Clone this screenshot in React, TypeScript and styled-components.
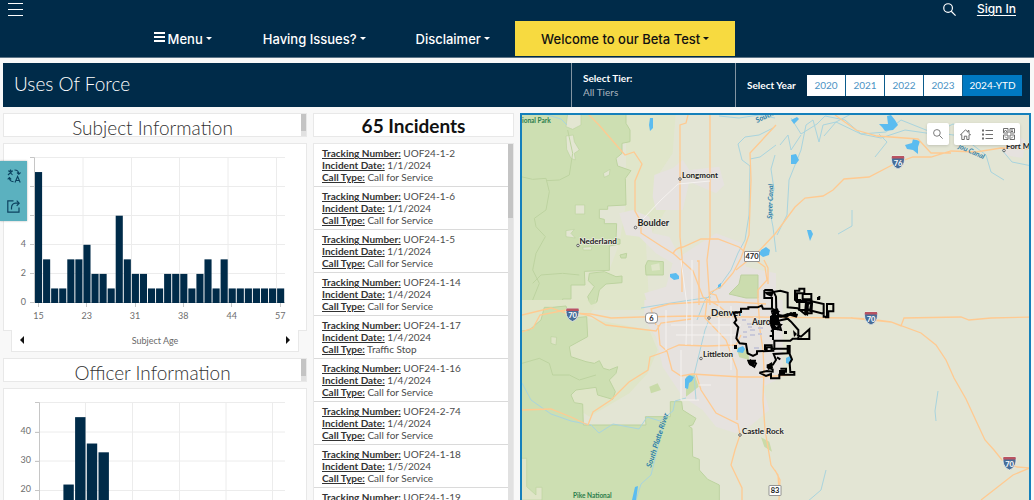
import React from "react";
import styled, { createGlobalStyle, css } from "styled-components";

const navy = "#002b49";
const bodyFont = `Lato, "Open Sans", sans-serif`;
const navFont = `Inter, "Open Sans", sans-serif`;

const GlobalStyle = createGlobalStyle`
  *, *::before, *::after { box-sizing: border-box; }
  html, body { margin: 0; background: #f8f8f8; }
  body { font-family: ${bodyFont}; overflow: hidden; }
  button, select { font: inherit; border: 0; margin: 0; padding: 0; background: none; cursor: pointer; }
  h1, h2, ul, p { margin: 0; padding: 0; font-weight: inherit; }
`;

const Page = styled.div`
  display: flex;
  flex-direction: column;
  height: 100vh;
`;

const Header = styled.header`
  background: ${navy};
  color: #fff;
  border-bottom: 1px solid #5d7588;
  font-family: ${navFont};
  padding-bottom: 1px;
`;

const TopRow = styled.div`
  display: flex;
  align-items: center;
  height: 21px;
  padding: 0 18px 3px 8px;
`;

const IconButton = styled.button`
  display: flex;
  align-items: center;
  justify-content: center;
  color: inherit;
`;

const SearchToggle = styled(IconButton)`
  margin-left: auto;
  margin-right: 21px;
`;

const SignIn = styled.a`
  color: #fff;
  font-size: 12px;
  font-weight: 500;
  line-height: 16px;
  text-underline-offset: 2px;
`;

const Nav = styled.nav`
  display: grid;
  grid-template-columns: 111px 152px 125px 220px;
  margin-left: 12.3%;
`;

const NavButton = styled.button<{ $accent?: boolean }>`
  display: flex;
  align-items: center;
  justify-content: center;
  gap: 3px;
  height: 35px;
  color: #fff;
  font-size: 13px;
  font-weight: 500;
  white-space: nowrap;
  ${(p) =>
    p.$accent &&
    css`
      background: #f7da40;
      color: #111;
    `}
`;

const Caret = styled.span`
  border: 3px solid transparent;
  border-top-color: currentColor;
  border-bottom: 0;
`;

const TitleBar = styled.div`
  display: grid;
  grid-template-columns: minmax(0, 568fr) minmax(0, 164fr) minmax(290px, 295fr);
  height: 44px;
  margin: 5px 4px 6px 3px;
  background: ${navy};
  color: #fff;
  flex: none;
`;

const Title = styled.h1`
  align-self: center;
  padding: 0 11px 2px;
  font-size: 19px;
  font-weight: 300;
  line-height: 24px;
`;

const TierField = styled.label`
  display: flex;
  flex-direction: column;
  padding: 8px 11px;
  border-left: 1px solid #8294a2;
  font-size: 10px;
  font-weight: 700;
  line-height: 14px;
`;

const TierSelect = styled.select`
  appearance: none;
  color: #a9b5bf;
  font-weight: 400;
  text-align: left;
`;

const YearField = styled.div`
  display: flex;
  align-items: center;
  justify-content: space-between;
  padding: 0 8px 0 11px;
  border-left: 1px solid #8294a2;
  font-size: 10px;
  font-weight: 700;
`;

const YearGroup = styled.div`
  display: flex;
  gap: 1px;
  background: #0b5c8c;
`;

const YearButton = styled.button<{ $active?: boolean }>`
  width: ${(p) => (p.$active ? 59 : 38)}px;
  height: 21px;
  background: ${(p) => (p.$active ? "#0079c1" : "#fff")};
  color: ${(p) => (p.$active ? "#fff" : "#4c93c4")};
  font-size: 10px;
  font-weight: 400;
`;

const Dashboard = styled.main`
  display: grid;
  grid-template-columns: minmax(0, 304fr) minmax(0, 201fr) minmax(0, 511fr);
  gap: 6px;
  flex: 1;
  min-height: 0;
  padding: 0 3px;
`;

const Column = styled.section`
  display: flex;
  flex-direction: column;
  min-height: 0;
  overflow: hidden;
`;

const Panel = styled.div`
  background: #fff;
  border: 1px solid #e8e8e8;
`;

const Heading = styled(Panel)<{ $strong?: boolean }>`
  display: flex;
  flex: none;
  height: 24px;
  margin-bottom: 6px;
  h2 {
    flex: 1;
    color: ${(p) => (p.$strong ? "#111" : "#323232")};
    font-size: 19px;
    font-weight: ${(p) => (p.$strong ? 700 : 300)};
    line-height: ${(p) => (p.$strong ? 24 : 28)}px;
    text-align: center;
  }
`;

const ScrollTrack = styled.div<{ $thumb: number }>`
  flex: none;
  width: 5px;
  background: #e1e1e1;
  &::before {
    content: "";
    display: block;
    height: ${(p) => p.$thumb}px;
    background: #c4c4c4;
  }
`;

const ChartPanel = styled(Panel)`
  flex: none;
  svg {
    display: block;
    width: 100%;
    height: auto;
  }
`;

const Pager = styled(Panel)`
  display: flex;
  flex: none;
  align-items: center;
  justify-content: space-between;
  height: 22px;
  margin: -1px 8px 6px;
  border-top: 0;
  padding: 0 8px 1px;
  color: #6a6a6a;
  font-size: 9px;
`;

const Arrow = styled.span<{ $next?: boolean }>`
  border: 4px solid transparent;
  ${(p) =>
    p.$next
      ? css`
          border-left-color: #111;
          border-right: 0;
        `
      : css`
          border-right-color: #111;
          border-left: 0;
        `}
`;

const ListPanel = styled(Panel)`
  display: flex;
  flex: 1;
  min-height: 0;
  border-bottom: 0;
`;

const IncidentList = styled.ul`
  flex: 1;
  list-style: none;
  overflow: hidden;
`;

const Incident = styled.li`
  padding: 3px 8px;
  border-bottom: 1px solid #dadada;
  color: #4c4c4c;
  font-size: 10px;
  line-height: 12px;
  b {
    color: #323232;
    text-decoration: underline;
  }
`;

const MapPanel = styled.section`
  position: relative;
  min-height: 0;
  border: 2px solid #1580bb;
  border-bottom: 0;
  overflow: hidden;
  > svg {
    display: block;
    width: 100%;
    height: 100%;
  }
`;

const MapTools = styled.div`
  position: absolute;
  top: 8px;
  right: 9px;
  display: flex;
  gap: 5px;
`;

const ToolGroup = styled.div`
  display: flex;
  background: #fff;
  border-radius: 2px;
  box-shadow: 0 1px 3px rgba(0, 0, 0, 0.15);
`;

const ToolButton = styled(IconButton)`
  width: 22px;
  height: 22px;
  color: #6e6e6e;
`;

const SideTools = styled.aside`
  position: fixed;
  left: 0;
  top: 161px;
  display: flex;
  flex-direction: column;
  background: #5bb1bf;
  box-shadow: 0 0 2px rgba(0, 0, 0, 0.3);
`;

const SideButton = styled(IconButton)`
  width: 27px;
  height: 30px;
  color: #0c4260;
`;

const MagnifierIcon = ({ size }: { size: number }) => (
  <svg width={size} height={size} viewBox="0 0 12 12" fill="none" stroke="currentColor" strokeWidth="1.1">
    <circle cx="4.7" cy="4.7" r="4" />
    <path d="M7.6 7.6 11.6 11.6" />
  </svg>
);

const ages = [9, 3, 1, 1, 3, 3, 4, 2, 2, 1, 6, 3, 2, 2, 1, 1, 2, 2, 2, 1, 2, 3, 1, 3, 1, 1, 1, 1, 1, 1, 1];

const SubjectChart = () => (
  <svg viewBox="4 144 302 186" fontFamily={bodyFont} fontSize="9" fill="#6e6e6e" role="img" aria-label="Subject age histogram">
    <g stroke="#ececec">
      {[157.5, 186.5, 215.5, 244.5, 273.5].map((y) => <path key={y} d={`M30 ${y}H285`} />)}
      {[83, 131.5, 179.5, 228, 276.5].map((x) => <path key={x} d={`M${x} 157V303`} />)}
    </g>
    <path d="M30 157.5H34.5V303M30 302.5H285M30 186.5h4M30 215.5h4M30 244.5h4M30 273.5h4M38.5 303v4M86.5 303v4M135.5 303v4M183.5 303v4M231.5 303v4M280.5 303v4" fill="none" stroke="#c6c6c6" />
    {ages.map((n, i) => (
      <rect key={i} x={35 + i * 8.07} y={303 - n * 14.55} width="7.1" height={n * 14.55} fill={navy} />
    ))}
    {[["0", 305], ["2", 276], ["4", 247]].map(([t, y]) => (
      <text key={t} x="26" y={y} textAnchor="end">{t}</text>
    ))}
    {[["15", 38.5], ["23", 86.7], ["31", 135], ["38", 183.3], ["44", 231.7], ["57", 280.3]].map(([t, x]) => (
      <text key={t} x={x} y="319" textAnchor="middle">{t}</text>
    ))}
  </svg>
);

const OfficerChart = () => (
  <svg viewBox="4 389 302 187" fontFamily={bodyFont} fontSize="9" fill="#6e6e6e" role="img" aria-label="Officer histogram">
    <g stroke="#ececec">
      {[402.5, 432, 461, 490.5, 519.5].map((y) => <path key={y} d={`M35 ${y}H285`} />)}
      {[85.5, 132.5, 179.5, 226, 272.5].map((x) => <path key={x} d={`M${x} 402V549`} />)}
    </g>
    <path d="M35 402.5H39.5V549M35 548.5H285M35 432.5h4M35 461.5h4M35 490.5h4M35 519.5h4" fill="none" stroke="#c6c6c6" />
    {[22, 45, 36, 33].map((n, i) => (
      <rect key={i} x={63.4 + i * 11.7} y={549 - n * 2.93} width="10.4" height={n * 2.93} fill={navy} />
    ))}
    {[["40", 434], ["30", 463], ["20", 492]].map(([t, y]) => (
      <text key={t} x="31" y={y} textAnchor="end">{t}</text>
    ))}
  </svg>
);

const incidents: [string, string, string][] = [
  ["UOF24-1-2", "1/1/2024", "Call for Service"],
  ["UOF24-1-6", "1/1/2024", "Call for Service"],
  ["UOF24-1-5", "1/1/2024", "Call for Service"],
  ["UOF24-1-14", "1/4/2024", "Call for Service"],
  ["UOF24-1-17", "1/4/2024", "Traffic Stop"],
  ["UOF24-1-16", "1/4/2024", "Call for Service"],
  ["UOF24-2-74", "1/4/2024", "Call for Service"],
  ["UOF24-1-18", "1/5/2024", "Call for Service"],
  ["UOF24-1-19", "1/5/2024", "Call for Service"],
];

const Shield = ({ x, y, n }: { x: number; y: number; n: string }) => (
  <g transform={`translate(${x} ${y})`}>
    <path d="M-6-6H6Q7-2 6 1 4 6 0 7-4 6-6 1-7-2-6-6Z" fill="#486d97" stroke="#f1f1ec" strokeWidth=".8" />
    <path d="M-6-6H6L6.4-3.4H-6.4Z" fill="#b95361" />
    <text y="3.6" textAnchor="middle" fill="#fff" fontSize="7.5" fontWeight="700">{n}</text>
  </g>
);

const RouteSign = ({ x, y, n }: { x: number; y: number; n: string }) => (
  <g transform={`translate(${x} ${y})`}>
    <rect x={n.length > 2 ? -7.5 : -6} y="-5" width={n.length > 2 ? 15 : 12} height="10" rx={n.length === 1 ? 3 : 0.5} fill="#fff" stroke="#888" strokeWidth=".9" />
    <text y="2.7" textAnchor="middle" fill="#222" fontSize="7.5" fontWeight="700">{n}</text>
  </g>
);

const cities: [string, number, number, number, number, number][] = [
  ["Longmont", 681, 178, 679, 179, 8],
  ["Boulder", 636.5, 226, 634.5, 227.5, 9],
  ["Nederland", 578.5, 244, 577, 245.5, 8],
  ["Denver", 710, 316, 708, 318, 9.5],
  ["Littleton", 702, 357, 700, 358.5, 8],
  ["Castle Rock", 741, 434, 739, 435, 8],
  ["Fort Morgan", 1005, 149, 1003, 150.5, 8],
];

const RegionMap = () => (
  <svg viewBox="521 115 508 385" preserveAspectRatio="xMinYMin slice" fontFamily={bodyFont} role="img" aria-label="Denver area map">
    <rect x="500" y="100" width="1200" height="900" fill="#e3e5d4" />

    {/* north-west land cover */}
    <g transform="translate(515 110) scale(.33333)">
      <path d="M330 0H480L470 130 430 190 450 300 390 400 400 600H0V480L280 480 310 400 330 280Z" fill="#e0e6ca" />
      <path d="M0 0H330V40L342 60V95L318 100V130L300 145 305 168 345 182 328 205 330 285 275 288V298H250V325L265 328V341H302L300 386 312 388V402L280 408V481L205 484 207 525H165V567H140V585L0 590Z" fill="#cddfb2" stroke="#bdd3a0" strokeWidth="3" />
      <path d="M155 12H195V45L170 58 150 50ZM150 78 172 75 175 95 190 120 175 130 178 150 165 145 152 118ZM178 285H206V312H178ZM150 362 175 358 165 370 178 384 150 380ZM262 190 282 178 280 195 265 202ZM200 412 228 410 226 420 202 420Z" fill="#e3e6d2" stroke="#bdd3a0" strokeWidth="2" />
      <path d="M220 490 265 485 300 500 318 498 318 518 270 522 250 540 243 575 225 588 215 560 235 530 217 512ZM312 435 332 430 330 444 315 444ZM388 468 395 452 442 455V495H390Z" fill="#cddfb2" stroke="#bdd3a0" strokeWidth="3" />
      <path d="M405 465 430 460 432 480 408 482Z" fill="#e0e6ca" />
      <path d="M15 200 50 208 90 205 100 245 90 300 55 325 60 350 88 380 60 430 50 480 70 520 50 570M155 60 170 130 160 195 130 210 90 212M50 520 75 495 140 490 190 495" fill="none" stroke="#bdd3a0" strokeWidth="3" />
      <path d="M415 195 440 185 470 175 500 150 520 180 610 170 625 225 600 250 520 215 500 300 420 300 410 260ZM310 310 350 300 400 320 410 370 460 380 490 440 600 370 680 400 690 470 780 490V600H400L385 550 450 530 470 460 420 430 370 380 330 375Z" fill="#e6e2df" />
    </g>

    {/* metro area and southern forest */}
    <g transform="translate(515 300) scale(.33333)">
      <path d="M385 0H800V230L740 260 760 330 700 380 660 400 600 380 560 330 500 290 440 200 420 110 385 60Z" fill="#e6e2df" />
      <path d="M0 0H240L235 20 215 55 400 90 425 150 395 220 340 280 220 350 190 330 0 340Z" fill="#dfe5c8" />
      <path d="M0 95 40 90 75 60 85 22H110L150 18 160 55 212 50 215 110 160 140 165 170 210 185 235 190 250 182 262 205 280 210 305 200 300 220 280 240 298 275 290 298 245 285 240 262 180 270 165 285 175 308 200 312 202 375H390L388 350H463V305H497L500 330 540 355 530 375 518 378 528 385 530 470 550 478V510L575 538 610 555V620H0Z" fill="#cddfb2" stroke="#bdd3a0" strokeWidth="3" />
      <path d="M0 475H32V560L60 585V562H78V600H0ZM105 110 122 112 120 135 105 130Z" fill="#dfe5c8" stroke="#bdd3a0" strokeWidth="2" />
      <path d="M18 190 70 175 100 190 110 225 160 225 190 240 240 225" fill="none" stroke="#bdd3a0" strokeWidth="3" />
      <path d="M660 140 695 150 700 180 670 172ZM510 230 535 220 548 260 510 290ZM735 412 760 425 768 455 745 440ZM400 260 425 250 435 270 405 280Z" fill="#c9dba9" />
      <path d="M215 0 235 -10 240 10 225 15Z" fill="#cddfb2" />
    </g>
    <path d="M740 275H757V298H745L728 294 738 284Z" fill="#cbdcae" stroke="#bdd0a0" />
    <path d="M1005 130 1024 140 1022 158 1003 155Z" fill="#e6e2df" />

    {/* rivers and creeks */}
    <g fill="none" stroke="#a9d4de" strokeWidth="1">
      <path d="M540 113 560 119 566 125M718 116l20 2 20-3 16 3M772 128 758 135 744 137 737 144 741 160 749 166 748 215 744 240 737 253 730 270 720 284 704 300 696 320M775 145l-16 12-10 2M774 155l-4 14 3 20-5 18 4 20 3 25" />
      <path d="M776 235 786 215 788 180 800 150 805 125 812 120 818 142 822 125 835 122 860 134 885 132 900 120 930 132 960 136 985 155 990 172 1003 180M790 118l10 16 16-10 8-8 20 4 16 14 20 4 24-8 28 4 20-10 30 12 28 2M779 145 787 135 790 150 800 135M874 157l12-15-8-8M850 114l-15 8-12 14M1001 150l10 12 20 4" />
      <path d="M851 210v16l-14 8M937 391l-3 20 1 10M825 470l-5 20-14 12" />
      <path d="M521 383 530 400 550 414 570 421 590 425 598 433 612 424 638 429 646 417 659 421 672 411 674 401 685 398M662 425 655 455 650 475 640 484 635 500" />
      <path d="M695 400 693 375 704 330 710 315M640 308l30-5 40-6" />
    </g>
    <g fill="#5bbcf0">
      <path d="M649 118h3v10l-3 3-1-6ZM669 274l6-1 3 3v3l-5 1-4-3ZM760 250l5-3 4 3-1 5-6 2-4-3ZM717 285l3-2v5l-3 1ZM790 120l6-3 2 2-5 5ZM790 155l5-1 3 6-3 4h-5ZM878 124l9 0-1-8 4-1 4 5 3 5-5 5-8 1-3-4ZM904 145l7-2 1-4 7 2-2 6 0 7-5-4-6-1ZM806 230h4l2 4-3 7-2-7ZM684 379l4-4 5 2-2 4-3 2-1 6-3-1ZM737 348l5-2 2 3-2 4-6-1ZM785 358l4-2 2 3-3 5-3-1ZM634 487l3-1-2 14h-4Z" />
    </g>

    {/* highways */}
    <g fill="none" stroke="#ffca91" strokeWidth="1.3">
      <path d="M587 114 598 125 617 147 624 155 633 152 641 164 634 181V211L640 222V233L660 246 673 254 692 271 702 297 718 306 725 312M687 115 685 123 679 125V237L681 257V292M709 115V237L706 260 709 305" />
      <path d="M672 254Q674 248 682 247L700 239H717L738 247 750 257M775 125 749 153 750 180 748 235 740 258 732 273 720 287 708 293M774 234 755 254 735 270" />
      <path d="M774 234 794 207 804 198 822 196 832 190 843 179 868 177 895 163 912 157 930 157 950 151 975 152 1000 148 1031 149M834 115 855 130 876 136 917 139 930 153 950 153" />
      <path d="M521 315 550 308 565 313 590 314 610 318 640 317 690 316 750 317 850 318 868 319 890 322 920 333 935 345 945 360 953 378 965 399 977 425 984 440 993 450 1001 460 1016 467 1031 468M850 318 890 322 900 326 903 318 960 317 968 320 990 318 1031 317M980 500 1012 475 1031 467" />
      <path d="M521 332 532 328 539 315 565 310 590 316 605 325 655 331 660 323 690 319M655 325 650 309 668 304 700 302 735 302 765 304M657 325 659 345 666 351 671 370 680 376 691 374 740 377 760 377 790 375M666 351 649 357 647 370 628 382 610 400 592 412 587 425M521 410 550 409 570 417 587 425" />
      <path d="M695 374 700 390 715 413 737 424 739 435 734 450 730 465 741 488 741 500M706 300 704 318 725 340 736 370 736 420M666 350 678 345 706 346 735 345 740 335M757 300 759 330 762 350 763 370 762 400 764 430 770 465 777 475 778 490M750 257 764 267 766 280 757 290V303M696 261H698V305M708 293 715 295 718 303M774 470 779 480 778 500M763 260l4 8v16" />
    </g>
    <g fill="none" stroke="#f5f2f0" strokeWidth="1">
      <path d="M642 219 660 200 677 184 709 181M680 260 686 305 685 345M691 260V345M665 310V350M718 305V360M670 325H740M675 335H735M730 306V370M680 350V400H698M710 385H698" />
    </g>
    <path d="M741 320h4M746 324h5M742 332h4M749 330h5M749 335h5M757 328h5M757 334h4M753 348h5M747 327h4M742 337h4" stroke="#c8c8d8" strokeWidth="2" />

    <g fill="#222" fontWeight="700" stroke="#ecebe1" strokeWidth="1.5" strokeLinejoin="round">
      {cities.map(([name, x, y, cx, cy, size]) => (
        <g key={name}>
          <circle cx={cx} cy={cy} r="1.3" fill="#eee" stroke="#333" strokeWidth=".7" />
          <text x={x} y={y} fontSize={size} paintOrder="stroke">{name}</text>
        </g>
      ))}
      <text x="751" y="325" fontSize="8.5" paintOrder="stroke">Aurora</text>
    </g>
    <g fill="#2b7d4b" fontSize="6.5" fontWeight="700">
      <text x="521" y="123">ional Park</text>
      <text x="572" y="498">Pike National</text>
    </g>
    <g fill="#2f7fa8" fontSize="7.5" fontWeight="700" fontStyle="italic">
      <text transform="translate(771 219) rotate(-88)" fontSize="7">Speer Canal</text>
      <text transform="translate(650 468) rotate(-72)">South Platte River</text>
      <text transform="translate(756 123) rotate(-25)">South Platte</text>
      <text transform="translate(957 148) rotate(24)" fontSize="7">jou Canal</text>
    </g>

    {/* city limits */}
    <g transform="translate(690 270) scale(.33333)" fill="none" stroke="#000" strokeWidth="6">
      <path d="M220 60H243L247 66 268 62 290 68V112L320 115 345 135M220 60V84H243V116M243 116H216L212 107 200 112H172V116H150V126L128 128 136 150 130 158 142 172 136 205 146 220 165 222 170 250 186 258 198 252V244L250 242M243 116 262 125 240 140 240 160 250 175 240 185M248 66 255 80 256 125 242 132M245 135 270 140 290 132 318 140" />
      <path d="M312 92V62H325V56H340V72H361V88H335V70H318V96H345V130H362V92H312M345 90 398 102V140H408V102H427V124H412V142H402M362 122 400 132M325 95V120H345M385 78V88" />
      <path d="M236 152H262L290 146 300 155 322 180V207H355V178L330 200 318 195M262 150 270 180 248 175M236 198H246M250 240V212H298L305 206H322M222 240H227V232H242V240M246 178V210" />
      <path d="M222 240V226H242V236H296M176 270 195 280 190 290 175 280 172 272 195 272M205 308 228 303 245 305V298L230 292V286L246 284 255 270 248 252 290 250V228H296V252L303 268 296 280 298 306H310V314H265V325H240V312L225 318 205 308M258 262 268 268M268 296H285V305H270" />
      <path d="M240 125 258 120 262 138 242 144M245 160 268 165 258 176 246 168M345 98 362 100 358 122 348 118M262 136 285 140 300 130 320 136" strokeWidth="8" />
    </g>
    <path d="M771 313h4v4h3v8h-4l2 5h-5l-2-5 2-3ZM748 360l6 2-1 5-5-2ZM766 365l5-3 1 6-5 2ZM797 299h3v4h-3ZM804 302l4 2-1 12-4-2ZM792 312h3v4h-3ZM816 297h3v3h-3ZM733 345h3v4h-3ZM783 331h3v3h-3ZM792 330l4 4-3 3ZM778 370h6v4h-6ZM763 292l10-1-2 6-5-2Z" fill="#000" />

    <Shield x={897} y={162} n="76" />
    <Shield x={571.5} y={314.5} n="70" />
    <Shield x={870} y={318} n="70" />
    <Shield x={1008.5} y={463} n="70" />
    <RouteSign x={751} y={256.5} n="470" />
    <RouteSign x={650.5} y={318} n="6" />
    <RouteSign x={774} y={490.5} n="83" />
  </svg>
);

const years = ["2020", "2021", "2022", "2023", "2024-YTD"];

export default function App() {
  return (
    <Page>
      <GlobalStyle />
      <Header>
        <TopRow>
          <IconButton aria-label="Open menu">
            <svg width="15" height="14" viewBox="0 0 15 14" stroke="currentColor">
              <path d="M0 1.5H15M0 7.5H15M0 13.5H15" />
            </svg>
          </IconButton>
          <SearchToggle aria-label="Search"><MagnifierIcon size={13} /></SearchToggle>
          <SignIn href="#signin">Sign In</SignIn>
        </TopRow>
        <Nav>
          <NavButton>
            <svg width="11" height="13" viewBox="0 0 11 13" stroke="currentColor" strokeWidth="2">
              <path d="M0 1H11M0 5H11M0 9H11" />
            </svg>
            Menu <Caret />
          </NavButton>
          <NavButton>Having Issues? <Caret /></NavButton>
          <NavButton>Disclaimer <Caret /></NavButton>
          <NavButton $accent>Welcome to our Beta Test <Caret /></NavButton>
        </Nav>
      </Header>

      <TitleBar>
        <Title>Uses Of Force</Title>
        <TierField>
          Select Tier:
          <TierSelect><option>All Tiers</option></TierSelect>
        </TierField>
        <YearField>
          Select Year
          <YearGroup>
            {years.map((y) => <YearButton key={y} $active={y === "2024-YTD"}>{y}</YearButton>)}
          </YearGroup>
        </YearField>
      </TitleBar>

      <Dashboard>
        <Column>
          <Heading><h2>Subject Information</h2><ScrollTrack $thumb={17} /></Heading>
          <ChartPanel><SubjectChart /></ChartPanel>
          <Pager>
            <IconButton aria-label="Previous chart"><Arrow /></IconButton>
            Subject Age
            <IconButton aria-label="Next chart"><Arrow $next /></IconButton>
          </Pager>
          <Heading><h2>Officer Information</h2><ScrollTrack $thumb={17} /></Heading>
          <ChartPanel><OfficerChart /></ChartPanel>
        </Column>

        <Column>
          <Heading $strong><h2>65 Incidents</h2></Heading>
          <ListPanel>
            <IncidentList>
              {incidents.map(([id, date, type]) => (
                <Incident key={id}>
                  <p><b>Tracking Number:</b> {id}</p>
                  <p><b>Incident Date:</b> {date}</p>
                  <p><b>Call Type:</b> {type}</p>
                </Incident>
              ))}
            </IncidentList>
            <ScrollTrack $thumb={74} />
          </ListPanel>
        </Column>

        <MapPanel>
          <RegionMap />
          <MapTools>
            <ToolGroup>
              <ToolButton aria-label="Search map"><MagnifierIcon size={10} /></ToolButton>
            </ToolGroup>
            <ToolGroup>
              <ToolButton aria-label="Default view">
                <svg width="11" height="11" viewBox="0 0 11 11" fill="none" stroke="currentColor">
                  <path d="M.5 5.8 5.5.8 8 3.2V1.5h1v2.8l1.5 1.5H9v4.7H6.8V7.2H4.3v3.3H1.8V5.8Z" />
                </svg>
              </ToolButton>
              <ToolButton aria-label="Legend">
                <svg width="11" height="11" viewBox="0 0 11 11" stroke="currentColor">
                  <path d="M3.5 1.5H11M3.5 5.5H11M3.5 9.5H11" />
                  <path d="M0 1.5H2M0 5.5H2M0 9.5H2" strokeWidth="2" />
                </svg>
              </ToolButton>
              <ToolButton aria-label="Basemap gallery">
                <svg width="12" height="12" viewBox="0 0 12 12" fill="none" stroke="currentColor">
                  <path d="M.5.5h4.5v4.5H.5ZM7 .5h4.5v4.5H7ZM.5 7h4.5v4.5H.5ZM7 7h4.5v4.5H7ZM1 4l1.5-2L4 4M8 2h2M8 3.5h2M2 8.5l2 2M8 10.5l2-2" />
                </svg>
              </ToolButton>
            </ToolGroup>
          </MapTools>
        </MapPanel>
      </Dashboard>

      <SideTools>
        <SideButton aria-label="Translate">
          <svg width="14" height="14" viewBox="0 0 14 14" fill="none" stroke="currentColor" strokeWidth="1.1">
            <path d="M1 2H6M3.5.5V2M2 2 5.5 6M5.2 2 1 6M8 13.5 10.6 7.5 13.2 13.5M9 11.5h3.4M7.5 1Q11.5 1 11.8 4.8M10 3.5l1.8 1.8L13.5 3.5M6.5 12.6Q2.6 12.6 2.4 9M.7 10.3 2.4 8.6 4.2 10.3" />
          </svg>
        </SideButton>
        <SideButton aria-label="Share">
          <svg width="13" height="13" viewBox="0 0 13 13" fill="none" stroke="currentColor" strokeWidth="1.2">
            <path d="M6.5.8H.8V12.2H12V7.5M4.5 9.5V7.5Q4.8 3.5 8.5 3.2H12M9.7.6 12.2 3.2 9.7 5.8" />
          </svg>
        </SideButton>
      </SideTools>
    </Page>
  );
}
